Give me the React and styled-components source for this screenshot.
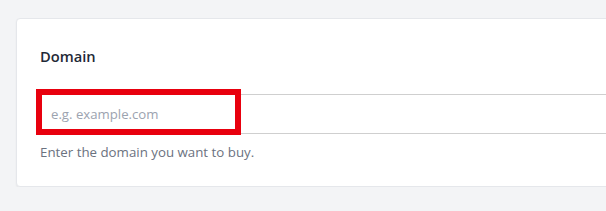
import React from 'react'
import styled, { createGlobalStyle } from 'styled-components';

const GlobalStyle = createGlobalStyle`
    html, body {
        margin: 0;
        padding: 0;
        background: #f3f4f6;
        overflow: hidden;
    }
    body {
        font-family: "Open Sans", "Noto Sans", sans-serif;
    }
`;

const Page = styled.main`
    padding: 18px 0 0 16px;
    width: 700px;
`;

const Card = styled.section`
    background: #fff;
    border: 1px solid #e5e7eb;
    border-radius: 4px;
    box-shadow: 0 1px 2px rgba(0, 0, 0, 0.06);
    padding: 27px 24px 24px 23px;
`;

const Label = styled.label`
    display: block;
    font-size: 14.7px;
    font-weight: 600;
    line-height: 20px;
    color: #1f2937;
    margin-bottom: 28px;
`;

const Field = styled.div`
    position: relative;
`;

const Input = styled.input`
    display: block;
    box-sizing: border-box;
    width: 100%;
    height: 40px;
    border: 1px solid #cfcfcf;
    border-radius: 2px;
    padding: 0 10px;
    font-family: inherit;
    font-size: 13.2px;
    color: #374151;
    outline: none;

    &::placeholder {
        color: #9ca3af;
    }
`;

const Highlight = styled.span`
    position: absolute;
    left: -4px;
    top: -5px;
    width: 205px;
    height: 46px;
    box-sizing: border-box;
    border: 6px solid #e8000e;
    pointer-events: none;
`;

const Help = styled.p`
    margin: 8px 0 0;
    font-size: 13.3px;
    line-height: 20px;
    color: #6b7280;
`;

const App = () => {
  return (
      <Page>
          <GlobalStyle />
          <Card>
              <Label htmlFor="domain">Domain</Label>
              <Field>
                  <Input id="domain" placeholder="e.g. example.com" />
                  <Highlight />
              </Field>
              <Help>Enter the domain you want to buy.</Help>
          </Card>
      </Page>
  )
}

export default App
